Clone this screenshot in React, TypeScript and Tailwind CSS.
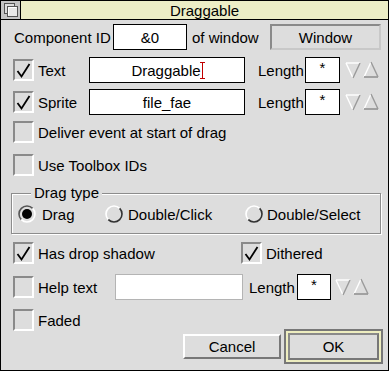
import React from 'react';

const FONT = { fontFamily: '"Liberation Sans", Arial, sans-serif' };

const Tick = () => (
  <svg width="17" height="17" viewBox="0 0 17 17">
    <path d="M2.5 9 L6.5 14.5 L14.5 2" stroke="black" strokeWidth="1.8" fill="none" />
  </svg>
);

const CheckBox = ({ checked }: { checked?: boolean }) => (
  <div className="w-[21px] h-[22px] shrink-0 flex items-center justify-center border-2 border-t-[#8a8a8a] border-l-[#8a8a8a] border-r-white border-b-white bg-[#dddddd]">
    {checked && <Tick />}
  </div>
);

const Radio = ({ selected }: { selected?: boolean }) => (
  <svg width="18" height="18" viewBox="0 0 18 18" className="shrink-0">
    <circle cx="9" cy="9" r="8" fill="#dddddd" />
    <path d="M3.34 14.66 A8 8 0 0 1 14.66 3.34" stroke={selected ? '#555555' : '#ffffff'} strokeWidth="1.6" fill="none" />
    <path d="M14.66 3.34 A8 8 0 0 1 3.34 14.66" stroke={selected ? '#ffffff' : '#333333'} strokeWidth="1.6" fill="none" />
    {selected && <circle cx="9" cy="9" r="5" fill="black" />}
  </svg>
);

const Arrows = () => (
  <div className="flex gap-[2px] shrink-0">
    <svg width="16" height="18" viewBox="0 0 16 18">
      <line x1="1" y1="2" x2="15" y2="2" stroke="white" strokeWidth="1.4" />
      <line x1="1" y1="2" x2="8" y2="17" stroke="white" strokeWidth="1.4" />
      <line x1="15" y1="2" x2="8" y2="17" stroke="#9a9a9a" strokeWidth="1.4" />
    </svg>
    <svg width="16" height="18" viewBox="0 0 16 18">
      <line x1="8" y1="1" x2="1" y2="16" stroke="white" strokeWidth="1.4" />
      <line x1="8" y1="1" x2="15" y2="16" stroke="#9a9a9a" strokeWidth="1.4" />
      <line x1="1" y1="16" x2="15" y2="16" stroke="#9a9a9a" strokeWidth="1.8" />
    </svg>
  </div>
);

const Field = ({ w, children, faded }: { w: string; children?: React.ReactNode; faded?: boolean }) => (
  <div
    className={`${w} h-[26px] shrink-0 bg-white flex items-center justify-center border ${faded ? 'border-[#b4b4b4]' : 'border-black'}`}
  >
    {children}
  </div>
);

const Caret = () => (
  <span className="relative inline-block w-[1px] h-[17px] bg-[#c00000] ml-[1px]">
    <span className="absolute -left-[2px] top-0 w-[5px] h-[1px] bg-[#c00000]" />
    <span className="absolute -left-[2px] bottom-0 w-[5px] h-[1px] bg-[#c00000]" />
  </span>
);

const LengthRow = ({ label, children, checked }: { label: string; children?: React.ReactNode; checked?: boolean }) => (
  <div className="flex items-center h-[26px] pl-[12px]">
    <CheckBox checked={checked} />
    <span className="w-[55px] pl-[4px]">{label}</span>
    <Field w="w-[156px]">{children}</Field>
    <span className="w-[47px] ml-[13px]">Length</span>
    <Field w="w-[35px]">
      <span className="-mt-[6px]">*</span>
    </Field>
    <div className="ml-[5px]">
      <Arrows />
    </div>
  </div>
);

export default function App() {
  return (
    <div style={FONT} className="w-[389px] h-[371px] bg-[#dddddd] border border-black flex flex-col text-[15px] text-black leading-none">
      <div className="h-[19px] flex border-b border-black shrink-0">
        <div className="w-[20px] bg-[#c4c4c4] border-r border-black flex items-center justify-center">
          <svg width="16" height="16" viewBox="0 0 16 16">
            <rect x="1.5" y="1.5" width="10" height="10" fill="#dddddd" stroke="#555555" />
            <rect x="4.5" y="4.5" width="10" height="10" fill="#e8e8e8" stroke="#555555" />
            <path d="M5.5 13.5 V5.5 H13.5" stroke="white" fill="none" />
          </svg>
        </div>
        <div className="flex-1 bg-[#ecedc6] flex items-center justify-center">Draggable</div>
      </div>

      <div className="flex flex-col">
        <div className="flex items-center h-[26px] mt-[4px] pl-[13px] pr-[7px]">
          <span className="w-[99px]">Component ID</span>
          <Field w="w-[74px]">&amp;0</Field>
          <span className="ml-[5px]">of window</span>
          <div className="ml-auto w-[111px] h-[26px] flex items-center justify-center border-2 border-t-[#8a8a8a] border-l-[#8a8a8a] border-r-[#c8c8c8] border-b-[#c8c8c8]">
            Window
          </div>
        </div>

        <div className="mt-[7px]">
          <LengthRow label="Text" checked>
            <span className="flex items-center">
              Draggable
              <Caret />
            </span>
          </LengthRow>
        </div>
        <div className="mt-[6px]">
          <LengthRow label="Sprite" checked>
            file_fae
          </LengthRow>
        </div>

        <div className="flex items-center h-[22px] mt-[6px] pl-[12px]">
          <CheckBox />
          <span className="pl-[4px]">Deliver event at start of drag</span>
        </div>
        <div className="flex items-center h-[22px] mt-[11px] pl-[12px]">
          <CheckBox />
          <span className="pl-[4px]">Use Toolbox IDs</span>
        </div>

        <div className="relative mt-[17px] ml-[10px] w-[370px] h-[41px] border border-[#8c8c8c] shadow-[inset_1px_1px_0_white,1px_1px_0_white] flex items-center pl-[6px]">
          <span className="absolute left-[19px] -top-[9px] bg-[#dddddd] px-[3px]">Drag type</span>
          <div className="flex items-center mt-[1px]">
            <Radio selected />
            <span className="ml-[6px] w-[63px]">Drag</span>
            <Radio />
            <span className="ml-[5px] w-[117px]">Double/Click</span>
            <Radio />
            <span className="ml-[4px]">Double/Select</span>
          </div>
        </div>

        <div className="flex items-center h-[22px] mt-[8px] pl-[12px]">
          <CheckBox checked />
          <span className="pl-[4px] w-[207px]">Has drop shadow</span>
          <CheckBox checked />
          <span className="pl-[4px]">Dithered</span>
        </div>

        <div className="flex items-center h-[26px] mt-[10px] pl-[12px]">
          <CheckBox />
          <span className="w-[81px] pl-[4px]">Help text</span>
          <Field w="w-[128px]" faded />
          <span className="w-[48px] ml-[6px]">Length</span>
          <Field w="w-[34px]">
            <span className="-mt-[6px]">*</span>
          </Field>
          <div className="ml-[4px]">
            <Arrows />
          </div>
        </div>

        <div className="flex items-center h-[22px] mt-[9px] pl-[12px]">
          <CheckBox />
          <span className="pl-[4px]">Faded</span>
        </div>

        <div className="flex items-center justify-end gap-[3px] h-[35px] -mt-[2px] pr-[5px]">
          <div className="w-[98px] h-[25px] flex items-center justify-center border-2 border-t-white border-l-white border-r-[#777777] border-b-[#777777]">
            Cancel
          </div>
          <div className="w-[99px] h-[35px] border-2 border-[#777777] bg-[#eeeec0] p-[2px]">
            <div className="w-full h-full flex items-center justify-center bg-[#dddddd] border-2 border-t-[#8a8a8a] border-l-[#8a8a8a] border-r-[#777777] border-b-[#777777]">
              OK
            </div>
          </div>
        </div>
      </div>
    </div>
  );
}
